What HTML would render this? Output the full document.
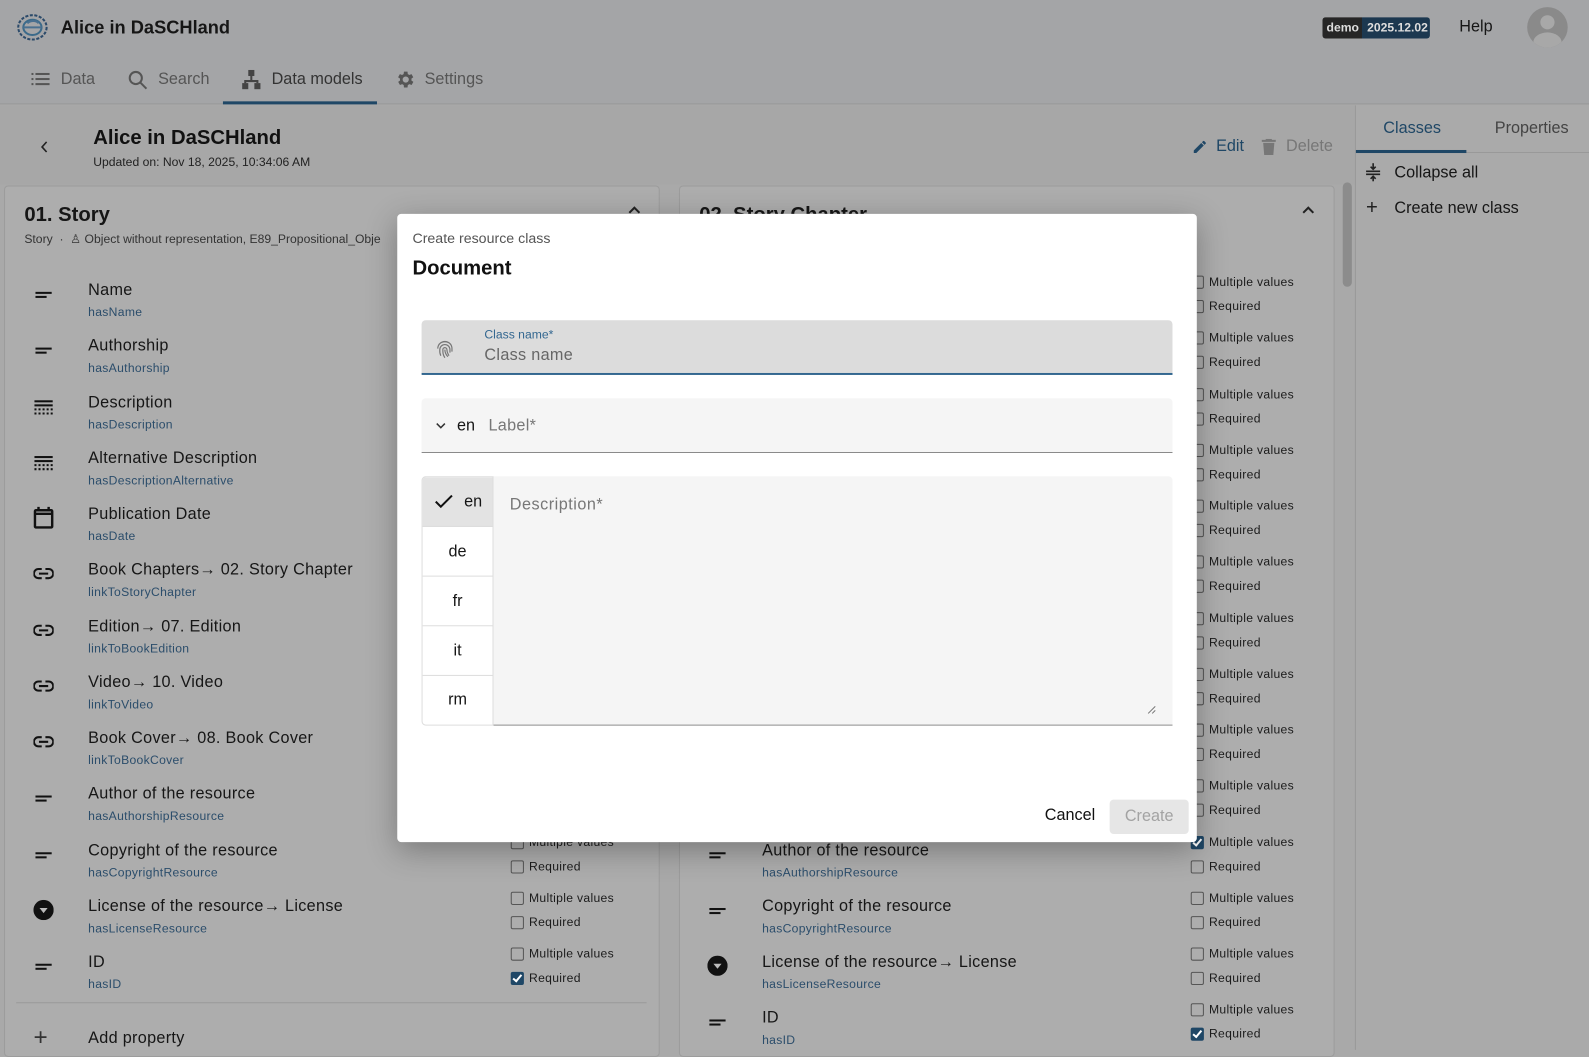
<!DOCTYPE html>
<html><head><meta charset="utf-8"><style>
*{box-sizing:border-box;margin:0;padding:0}
html,body{width:1589px;height:1050px;overflow:hidden;background:#a9a9a9;font-family:"Liberation Sans",sans-serif;color:#161616}
#s{position:absolute;left:0;top:0;width:1568px;height:1036px;transform:scale(1.01339);transform-origin:0 0}
.a{position:absolute;white-space:nowrap}
.lbl{font-size:16px;line-height:20px;letter-spacing:.3px}
.sub{font-size:12px;line-height:16px;color:#2b4d6b;letter-spacing:.3px}
.cb{position:absolute;width:13px;height:13px;border:1.5px solid #555;border-radius:2px}
.cb.on{background:#1f4766;border-color:#1f4766}
.cb.on::after{content:"";position:absolute;left:3px;top:0px;width:3px;height:7px;border:solid #fff;border-width:0 2px 2px 0;transform:rotate(40deg)}
.cbt{font-size:12px;line-height:16px;letter-spacing:.3px;color:#1b1b1b}
</style></head><body><div id="s">
<div class="a" style="left:0;top:0;width:1568px;height:103px;background:#a4a5a7;border-bottom:1px solid #999"></div>
<svg class="a" style="left:16px;top:13px" width="32" height="28" viewBox="0 0 32 28"><g fill="none" stroke="#2b4a6a" stroke-width="2"><ellipse cx="16" cy="14" rx="14" ry="12" stroke-dasharray="3 1.5"/><ellipse cx="16" cy="14" rx="9" ry="7.5" stroke="#3b6a8a"/><path d="M7 14h18M11 10c3-3 9-3 11 0" stroke="#4a7090"/></g></svg>
<div class="a" style="left:60px;top:16px;font-size:18px;line-height:22px;font-weight:bold">Alice in DaSCHland</div>
<svg class="a" style="left:31px;top:71px" width="18" height="14" viewBox="0 0 18 14" fill="#555"><rect x="0" y="1" width="2" height="2"/><rect x="0" y="6" width="2" height="2"/><rect x="0" y="11" width="2" height="2"/><rect x="4" y="1" width="14" height="2"/><rect x="4" y="6" width="14" height="2"/><rect x="4" y="11" width="14" height="2"/></svg>
<div class="a" style="left:60px;top:69px;font-size:16px;line-height:19px;color:#555">Data</div>
<svg class="a" style="left:126px;top:69px" width="20" height="20" viewBox="0 0 20 20" fill="none" stroke="#555" stroke-width="2"><circle cx="8" cy="8" r="6"/><path d="M12.5 12.5l6 6"/></svg>
<div class="a" style="left:156px;top:69px;font-size:16px;line-height:19px;color:#555">Search</div>
<svg class="a" style="left:238px;top:69px" width="20" height="20" viewBox="0 0 20 20" fill="#444"><rect x="7" y="0" width="6" height="6"/><rect x="1" y="13" width="6" height="6"/><rect x="13" y="13" width="6" height="6"/><path d="M9 6h2v4h6v3h-2v-1H5v1H3v-3h6z"/></svg>
<div class="a" style="left:268px;top:69px;font-size:16px;line-height:19px;color:#333">Data models</div>
<div class="a" style="left:220px;top:100px;width:152px;height:3px;background:#1f4766"></div>
<svg class="a" style="left:389px;top:68px" width="21" height="21" viewBox="0 0 24 24" fill="#555"><path d="M19.4 13a7.5 7.5 0 000-2l2.1-1.6-2-3.5-2.5 1a7.5 7.5 0 00-1.7-1L15 3h-4l-.4 2.9a7.5 7.5 0 00-1.7 1l-2.5-1-2 3.5L6.6 11a7.5 7.5 0 000 2l-2.1 1.6 2 3.5 2.5-1a7.5 7.5 0 001.7 1L11 21h4l.4-2.9a7.5 7.5 0 001.7-1l2.5 1 2-3.5zM13 15.5a3.5 3.5 0 110-7 3.5 3.5 0 010 7z"/></svg>
<div class="a" style="left:419px;top:69px;font-size:16px;line-height:19px;color:#555">Settings</div>
<div class="a" style="left:1305px;top:17px;width:106px;height:21px;border-radius:3px;overflow:hidden;font-size:12px;font-weight:bold;line-height:21px;color:#ddd"><span style="display:inline-block;background:#262626;padding:0 3px 0 4px;height:21px">demo</span><span style="display:inline-block;background:#1c3850;padding:0 5px;height:21px">2025.12.02</span></div>
<div class="a" style="left:1440px;top:17px;font-size:16px;line-height:20px">Help</div>
<div class="a" style="left:1507px;top:7px;width:40px;height:40px;border-radius:50%;background:#8a8a8a;overflow:hidden"><div class="a" style="left:13px;top:8px;width:14px;height:14px;border-radius:50%;background:#a8a8a8"></div><div class="a" style="left:6px;top:25px;width:28px;height:20px;border-radius:50%;background:#a8a8a8"></div></div>

<div class="a" style="left:0;top:104px;width:1338px;height:78px;background:#a7a7a7"></div>
<svg class="a" style="left:40px;top:139px" width="8" height="12" viewBox="0 0 8 12" fill="none" stroke="#222" stroke-width="1.6"><path d="M6 1L1.5 6 6 11"/></svg>
<div class="a" style="left:92px;top:124px;font-size:20px;line-height:24px;font-weight:bold;color:#111">Alice in DaSCHland</div>
<div class="a" style="left:92px;top:153px;font-size:12px;line-height:15px;color:#222">Updated on: Nov 18, 2025, 10:34:06 AM</div>
<svg class="a" style="left:1176px;top:137px" width="16" height="16" viewBox="0 0 24 24" fill="#1f4766"><path d="M3 17.25V21h3.75L17.8 9.94l-3.75-3.75zM20.7 7.04a1 1 0 000-1.41l-2.34-2.34a1 1 0 00-1.41 0l-1.83 1.83 3.75 3.75z"/></svg>
<div class="a" style="left:1200px;top:135px;font-size:16px;line-height:20px;color:#1f4766">Edit</div>
<svg class="a" style="left:1245px;top:137px" width="14" height="16" viewBox="0 0 14 16" fill="#777"><rect x="0" y="1" width="14" height="2"/><rect x="4" y="0" width="6" height="2"/><path d="M1.5 4h11l-1 12h-9z"/></svg>
<div class="a" style="left:1269px;top:135px;font-size:16px;line-height:20px;color:#777">Delete</div>

<div class="a" style="left:1337px;top:104px;width:231px;height:932px;background:#aaaaaa;border-left:1px solid #999"></div>
<div class="a" style="left:1338px;top:150px;width:230px;height:1px;background:#999"></div>
<div class="a" style="left:1338px;top:148px;width:109px;height:3px;background:#1f4766"></div>
<div class="a" style="left:1365px;top:117px;font-size:16px;line-height:20px;color:#1f4766">Classes</div>
<div class="a" style="left:1475px;top:117px;font-size:16px;line-height:20px;color:#444">Properties</div>
<svg class="a" style="left:1348px;top:161px" width="14" height="18" viewBox="0 0 14 18" fill="none" stroke="#222" stroke-width="1.6"><path d="M0 8h14M0 11h14M7 0v6M4.5 3.5L7 6l2.5-2.5M7 18v-5M4.5 15.5L7 13l2.5 2.5"/></svg>
<div class="a" style="left:1376px;top:161px;font-size:16px;line-height:20px">Collapse all</div>
<div class="a" style="left:1348px;top:194px;font-size:20px;line-height:22px;color:#222">+</div>
<div class="a" style="left:1376px;top:196px;font-size:16px;line-height:20px">Create new class</div>
<div class="a" style="left:1325px;top:180px;width:9px;height:103px;border-radius:5px;background:#8c8c8c"></div>

<div class="a" style="left:4px;top:183px;width:647px;height:860px;background:#adadad;border:1px solid #9c9c9c;border-radius:4px"></div>
<div class="a" style="left:24px;top:200px;font-size:20px;line-height:24px;font-weight:bold">01. Story</div>
<div class="a" style="left:24px;top:229px;font-size:12px;line-height:15px;color:#333">Story &nbsp;· &nbsp;♙ Object without representation, E89_Propositional_Obje</div>
<svg class="a" style="left:620px;top:203px" width="12" height="8" viewBox="0 0 12 8" fill="none" stroke="#222" stroke-width="2"><path d="M1 7l5-5 5 5"/></svg>
<div class="a" style="left:16px;top:989px;width:622px;height:1px;background:#999"></div>
<div class="a" style="left:33px;top:1011px;font-size:24px;line-height:26px;color:#333">+</div>
<div class="a lbl" style="left:87px;top:1015px">Add property</div>

<div class="a" style="left:670px;top:183px;width:647px;height:860px;background:#adadad;border:1px solid #9c9c9c;border-radius:4px"></div>
<div class="a" style="left:690px;top:200px;font-size:20px;line-height:24px;font-weight:bold">02. Story Chapter</div>
<svg class="a" style="left:1285px;top:203px" width="12" height="8" viewBox="0 0 12 8" fill="none" stroke="#222" stroke-width="2"><path d="M1 7l5-5 5 5"/></svg>

<div id="rows"></div>
<script>
var I={
t:'<svg width="18" height="18" viewBox="0 0 18 18" fill="#111"><rect x="1" y="7" width="16" height="2"/><rect x="1" y="11" width="11" height="2"/></svg>',
r:'<svg width="20" height="18" viewBox="0 0 20 18" fill="#111"><rect x="1" y="3" width="18" height="2"/><rect x="1" y="7" width="18" height="2"/><path d="M1 11h2v2H1zM5 11h2v2H5zM9 11h2v2H9zM13 11h2v2h-2zM17 11h2v2h-2zM1 15h2v2H1zM5 15h2v2H5zM9 15h2v2H9zM13 15h2v2h-2zM17 15h2v2h-2z"/></svg>',
d:'<svg width="20" height="22" viewBox="0 0 20 22" fill="none" stroke="#111" stroke-width="2.4"><rect x="1.5" y="3.5" width="17" height="17" rx="1"/><path d="M1.5 7h17M5 0v4M15 0v4"/></svg>',
l:'<svg width="22" height="14" viewBox="0 0 22 14" fill="none" stroke="#111" stroke-width="2.2"><path d="M9 2H5.5a5 5 0 000 10H9M13 2h3.5a5 5 0 010 10H13M6 7h10"/></svg>',
c:'<svg width="20" height="20" viewBox="0 0 20 20"><circle cx="10" cy="10" r="10" fill="#111"/><path d="M6 8h8l-4 5z" fill="#bbb"/></svg>'};
var c1=[["t","Name","hasName"],["t","Authorship","hasAuthorship"],["r","Description","hasDescription"],["r","Alternative Description","hasDescriptionAlternative"],["d","Publication Date","hasDate"],["l","Book Chapters→ 02. Story Chapter","linkToStoryChapter"],["l","Edition→ 07. Edition","linkToBookEdition"],["l","Video→ 10. Video","linkToVideo"],["l","Book Cover→ 08. Book Cover","linkToBookCover"],["t","Author of the resource","hasAuthorshipResource"],["t","Copyright of the resource","hasCopyrightResource"],["c","License of the resource→ License","hasLicenseResource"],["t","ID","hasID"]];
var h='';
function row(x,cx,y,r,m,q){
 h+='<div class="a" style="left:'+(x-54)+'px;top:'+(y-7)+'px;width:20px;height:24px;display:flex;align-items:center;justify-content:center">'+I[r[0]]+'</div>';
 h+='<div class="a lbl" style="left:'+x+'px;top:'+(y-8)+'px">'+r[1]+'</div>';
 h+='<div class="a sub" style="left:'+x+'px;top:'+(y+15)+'px">'+r[2]+'</div>';
 h+='<div class="cb'+(m?' on':'')+'" style="left:'+cx+'px;top:'+(y-13)+'px"></div><div class="a cbt" style="left:'+(cx+18)+'px;top:'+(y-15)+'px">Multiple values</div>';
 h+='<div class="cb'+(q?' on':'')+'" style="left:'+cx+'px;top:'+(y+11)+'px"></div><div class="a cbt" style="left:'+(cx+18)+'px;top:'+(y+9)+'px">Required</div>';
}
for(var i=0;i<c1.length;i++){row(87,504,285+55.25*i,c1[i],false,i==12);}
var c2=[["t","Title","hasTitle"],["t","Number","hasNumber"],["r","Text","hasText"],["r","Summary","hasSummary"],["t","Chapter","hasChapter"],["l","Story→ 01. Story","isPartOfStory"],["l","Image→ Image","hasImage"],["l","Audio→ Audio","hasAudio"],["t","Keyword","hasKeyword"],["t","Note","hasNote"]].concat(c1.slice(9));
for(var j=0;j<c2.length;j++){row(752,1175,285+55.25*j,c2[j],j==10,j==13);}
document.getElementById('rows').innerHTML=h;
</script>

<div class="a" style="left:392px;top:211px;width:789px;height:620px;background:#fff;border-radius:4px;box-shadow:0 8px 30px rgba(0,0,0,.3)">
 <div class="a" style="left:15px;top:16px;font-size:14px;line-height:17px;color:#555">Create resource class</div>
 <div class="a" style="left:15px;top:42px;font-size:20px;line-height:24px;font-weight:bold;color:#111">Document</div>
 <div class="a" style="left:24px;top:105px;width:741px;height:54px;background:#dcdcdc;border-radius:4px 4px 0 0;border-bottom:2px solid #336790"></div>
 <svg class="a" style="left:38px;top:123px" width="18" height="20" viewBox="0 0 18 20" fill="none" stroke="#777" stroke-width="1.2"><path d="M3 6a8 8 0 0112 0M2 10a7 7 0 0114 0v3M5 17a11 11 0 01-1-6 5 5 0 0110 0v3M9 19c-2-3-2-5-2-8a2 2 0 014 0c0 3 1 4 2 6M9 11c0 3 1 5 3 7"/></svg>
 <div class="a" style="left:86px;top:112px;font-size:12px;line-height:14px;color:#336790">Class name*</div>
 <div class="a" style="left:86px;top:130px;font-size:16px;line-height:20px;color:#666;letter-spacing:.3px">Class name</div>
 <div class="a" style="left:24px;top:182px;width:741px;height:54px;background:#f5f5f5;border-radius:4px 4px 0 0;border-bottom:1px solid #888"></div>
 <svg class="a" style="left:38px;top:205px" width="10" height="8" viewBox="0 0 10 8" fill="none" stroke="#333" stroke-width="1.5"><path d="M1 2l4 4 4-4"/></svg>
 <div class="a" style="left:59px;top:200px;font-size:16px;line-height:20px">en</div>
 <div class="a" style="left:90px;top:200px;font-size:16px;line-height:20px;color:#777;letter-spacing:.3px">Label*</div>
 <div class="a" style="left:24px;top:259px;width:71px;height:246px;background:#fff;border:1px solid #ddd;border-radius:4px 0 0 4px;overflow:hidden">
  <div style="position:relative;height:49px;background:#e3e3e3;border-bottom:1px solid #ddd;font-size:16px;line-height:49px;padding-left:41px"><svg style="position:absolute;left:12px;top:17px" width="18" height="14" viewBox="0 0 18 14" fill="none" stroke="#111" stroke-width="2"><path d="M1 7l5 5L17 1"/></svg>en</div>
  <div style="height:49px;border-bottom:1px solid #ddd;font-size:16px;line-height:49px;text-align:center">de</div>
  <div style="height:49px;border-bottom:1px solid #ddd;font-size:16px;line-height:49px;text-align:center">fr</div>
  <div style="height:49px;border-bottom:1px solid #ddd;font-size:16px;line-height:49px;text-align:center">it</div>
  <div style="height:48px;font-size:16px;line-height:48px;text-align:center">rm</div>
 </div>
 <div class="a" style="left:95px;top:259px;width:670px;height:246px;background:#f5f5f5;border-bottom:1px solid #777;border-radius:0 4px 0 0"></div>
 <div class="a" style="left:111px;top:278px;font-size:16px;line-height:20px;color:#777;letter-spacing:.5px">Description*</div>
 <svg class="a" style="left:740px;top:485px" width="9" height="9" viewBox="0 0 9 9" stroke="#777" stroke-width="1"><path d="M1 8L8 1M5 8L8 5"/></svg>
 <div class="a" style="left:639px;top:584px;font-size:16px;line-height:20px;color:#111">Cancel</div>
 <div class="a" style="left:703px;top:578px;width:78px;height:34px;background:#e6e6e6;border-radius:4px;font-size:16px;line-height:34px;text-align:center;color:#a3a3a3">Create</div>
</div>
</div></body></html>
